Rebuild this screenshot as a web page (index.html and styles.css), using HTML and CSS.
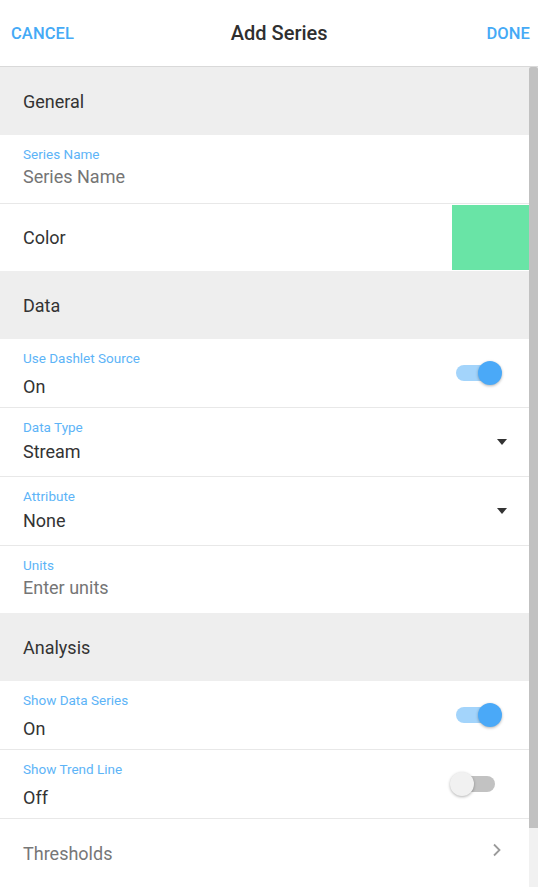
FILE: index.html
```html
<!DOCTYPE html>
<html>
<head>
<meta charset="utf-8">
<link rel="stylesheet" href="styles.css">
</head>
<body>
<div class="app">
  <header class="topbar">
    <span class="action">CANCEL</span>
    <span class="title">Add Series</span>
    <span class="action">DONE</span>
  </header>
  <div class="body">
    <main class="list">
      <div class="group-head">General</div>
      <div class="field bordered">
        <div class="stack">
          <span class="label">Series Name</span>
          <span class="value placeholder input-gap">Series Name</span>
        </div>
      </div>
      <div class="field color-row">
        <span class="plain">Color</span>
        <div class="swatch"></div>
      </div>

      <div class="group-head">Data</div>
      <div class="field bordered">
        <div class="stack">
          <span class="label">Use Dashlet Source</span>
          <span class="value toggle-gap">On</span>
        </div>
        <div class="toggle on"><div class="track"></div><div class="thumb"></div></div>
      </div>
      <div class="field bordered">
        <div class="stack">
          <span class="label">Data Type</span>
          <span class="value select-gap">Stream</span>
        </div>
        <div class="caret"></div>
      </div>
      <div class="field bordered">
        <div class="stack">
          <span class="label">Attribute</span>
          <span class="value select-gap">None</span>
        </div>
        <div class="caret"></div>
      </div>
      <div class="field last">
        <div class="stack">
          <span class="label">Units</span>
          <span class="value placeholder input-gap">Enter units</span>
        </div>
      </div>

      <div class="group-head">Analysis</div>
      <div class="field bordered">
        <div class="stack">
          <span class="label">Show Data Series</span>
          <span class="value toggle-gap">On</span>
        </div>
        <div class="toggle on"><div class="track"></div><div class="thumb"></div></div>
      </div>
      <div class="field bordered">
        <div class="stack">
          <span class="label">Show Trend Line</span>
          <span class="value toggle-gap">Off</span>
        </div>
        <div class="toggle off"><div class="track"></div><div class="thumb"></div></div>
      </div>
      <div class="field link-row">
        <span class="plain muted">Thresholds</span>
        <svg class="chevron" width="10" height="14" viewBox="0 0 10 14"><path d="M2 1.5 L7.5 7 L2 12.5" fill="none" stroke="#9a9a9a" stroke-width="1.8"/></svg>
      </div>
    </main>
    <div class="scrollbar"><div class="sb-thumb"></div></div>
  </div>
</div>
</body>
</html>
```

FILE: styles.css
```css
* { box-sizing: border-box; }
html, body { margin: 0; padding: 0; }
body {
  font-family: Roboto, "Liberation Sans", sans-serif;
  background: #ffffff;
  color: #333333;
  width: 538px;
  height: 887px;
  overflow: hidden;
}
.app { display: flex; flex-direction: column; height: 887px; }
.topbar {
  height: 67px;
  border-bottom: 1px solid #d9d9d9;
  display: flex;
  align-items: center;
  justify-content: space-between;
  padding: 0 8px 0 11px;
  flex: none;
}
.action {
  color: #45aaf6;
  font-size: 16.5px;
  font-weight: 500;
  letter-spacing: 0.1px;
}
.title {
  font-size: 20px;
  font-weight: 500;
  color: #2f2f2f;
  margin-right: 2px;
}
.body { display: flex; flex: 1; min-height: 0; }
.list { width: 529px; flex: none; display: flex; flex-direction: column; }
.scrollbar {
  width: 9px;
  flex: none;
  background: #f1f1f1;
  display: flex;
  flex-direction: column;
}
.sb-thumb {
  height: 761px;
  background: #c1c1c1;
  border-radius: 2px 2px 0 0;
}
.group-head {
  height: 68px;
  flex: none;
  background: #eeeeee;
  display: flex;
  align-items: center;
  padding-left: 23px;
  font-size: 18px;
  color: #333333;
}
.field {
  flex: none;
  display: flex;
  align-items: center;
  justify-content: space-between;
  padding-left: 23px;
  background: #ffffff;
}
.field.bordered { height: 69px; border-bottom: 1px solid #e8e8e8; align-items: stretch; }
.field.last { height: 67px; align-items: stretch; }
.stack { display: flex; flex-direction: column; padding-top: 11px; }
.label {
  font-size: 13.5px;
  line-height: 16px;
  color: #5db4f7;
}
.value {
  font-size: 18px;
  line-height: 24px;
  color: #333333;
}
.placeholder { color: #757575; }
.input-gap { margin-top: 3px; }
.select-gap { margin-top: 5px; }
.toggle-gap { margin-top: 9px; }
.plain { font-size: 18px; color: #333333; }
.muted { color: #777777; }
.color-row { height: 67px; padding-top: 1px; padding-bottom: 1px; align-items: center; }
.swatch {
  width: 77px;
  height: 65px;
  background: #69e4a6;
  align-self: stretch;
}
.toggle {
  position: relative;
  width: 52px;
  height: 24px;
  margin-right: 27px;
  align-self: center;
}
.toggle .track {
  position: absolute;
  left: 6px;
  top: 4px;
  width: 41px;
  height: 16px;
  border-radius: 8px;
}
.toggle .thumb {
  position: absolute;
  top: 0;
  width: 24px;
  height: 24px;
  border-radius: 50%;
  box-shadow: 0 1px 3px rgba(0,0,0,0.3);
}
.toggle.on .track { background: #a3d4fb; }
.toggle.on .thumb { right: 0; background: #4aa9f8; }
.toggle.off .track { background: #c2c2c2; left: 4px; }
.toggle.off .thumb { left: 0; background: #f1f1f1; }
.caret {
  align-self: center;
  width: 0;
  height: 0;
  border-left: 5.5px solid transparent;
  border-right: 5.5px solid transparent;
  border-top: 6px solid #333333;
  margin-right: 22px;
}
.link-row { height: 68px; }
.chevron { margin-right: 27px; margin-top: -6px; }
```
